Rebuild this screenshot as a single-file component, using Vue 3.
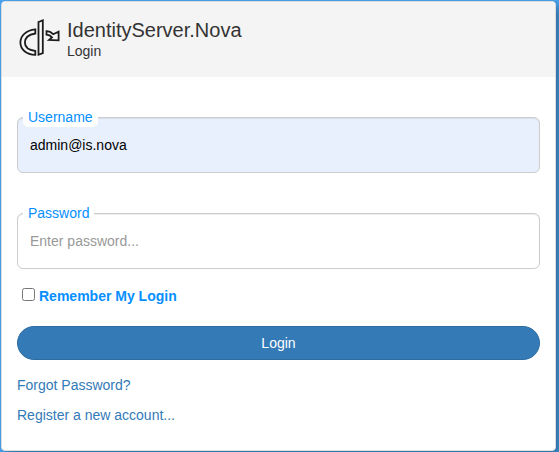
<script setup>
import { ref } from 'vue'

const username = ref('admin@is.nova')
const password = ref('')
const remember = ref(false)
</script>

<template>
  <main class="page">
    <section class="panel">
      <header class="heading">
        <svg class="logo" viewBox="0 0 42 40" width="42" height="40" aria-hidden="true">
          <g fill="#f8f8f8" stroke="#1c1c1c" stroke-width="1.8" stroke-linejoin="miter">
            <path d="M17.3 11.4C8.5 12.2 2.4 17.6 2.4 24.5C2.4 31.5 8.5 36.6 17.3 36.8V33C11.3 32.3 6.9 29.5 6.9 24.6C6.9 19.7 11.3 16.5 17.3 15.5Z" />
            <path d="M20.5 4L24.8 2.4V35.2L20.5 36.8Z" />
            <path d="M28.5 13.2C31 13.1 33.2 14.2 35.2 16.2L40.6 13.6V22.3L31 22L34 19.3C32.5 17.5 30.8 16.8 28.5 16.7Z" />
          </g>
        </svg>
        <div>
          <h1 class="title">IdentityServer.Nova</h1>
          <div class="subtitle">Login</div>
        </div>
      </header>
      <form class="body" @submit.prevent>
        <div class="field">
          <label class="caption" for="username">Username</label>
          <input id="username" v-model="username" class="control filled" type="text" />
        </div>
        <div class="field">
          <label class="caption" for="password">Password</label>
          <input id="password" v-model="password" class="control" type="password" placeholder="Enter password..." />
        </div>
        <label class="remember">
          <input v-model="remember" class="check" type="checkbox" />
          <strong>Remember My Login</strong>
        </label>
        <button class="submit" type="submit">Login</button>
        <a class="link" href="#">Forgot Password?</a>
        <a class="link" href="#">Register a new account...</a>
      </form>
    </section>
  </main>
</template>

<style>
body {
  margin: 0;
  overflow: hidden;
}
</style>

<style scoped>
.page {
  box-sizing: border-box;
  height: 452px;
  padding: 1px 3px 1px 1px;
  background: #47a3ee;
  font: 14px/20px "Liberation Sans", Arial, sans-serif;
  color: #333;
  overflow: hidden;
}
.panel {
  box-sizing: border-box;
  height: 450px;
  border: 1px solid #ddd;
  border-radius: 4px;
  background: #fff;
  box-shadow: 5px 5px 10px rgba(0, 0, 0, 0.32);
}
.heading {
  box-sizing: border-box;
  display: flex;
  gap: 7px;
  height: 75px;
  padding: 16px 16px 0;
  border-radius: 3px 3px 0 0;
  background: #f4f4f4;
}
.logo {
  flex: none;
}
.title {
  margin: 0;
  font-size: 20px;
  line-height: 24px;
  font-weight: 400;
}
.subtitle {
  line-height: 18px;
}
.body {
  display: flex;
  flex-direction: column;
  padding: 40px 15px 0;
}
.field {
  position: relative;
  height: 56px;
  margin-bottom: 40px;
}
.caption {
  position: absolute;
  left: 6px;
  top: -10px;
  padding: 0 5px;
  border-radius: 5px;
  background: #fff;
  color: #068fff;
}
.control {
  box-sizing: border-box;
  display: block;
  width: 100%;
  height: 56px;
  padding: 6px 12px;
  border: 1px solid #ccc;
  border-radius: 6px;
  background: #fff;
  box-shadow: inset 0 1px 1px rgba(0, 0, 0, 0.075);
  color: #000;
  font: inherit;
  outline: none;
}
.control::placeholder {
  color: #999;
}
.filled {
  background: #e8f0fe;
}
.remember {
  display: flex;
  align-items: center;
  gap: 4px;
  height: 20px;
  margin: -23px 0 20px 5px;
  color: #068fff;
}
.check {
  width: 13px;
  height: 13px;
  margin: 0 0 3px;
}
.submit {
  height: 34px;
  margin-bottom: 15px;
  border: 1px solid #2e6da4;
  border-radius: 17px;
  background: #337ab7;
  color: #fff;
  font: inherit;
}
.link {
  margin-bottom: 10px;
  color: #337ab7;
  text-decoration: none;
}
</style>
